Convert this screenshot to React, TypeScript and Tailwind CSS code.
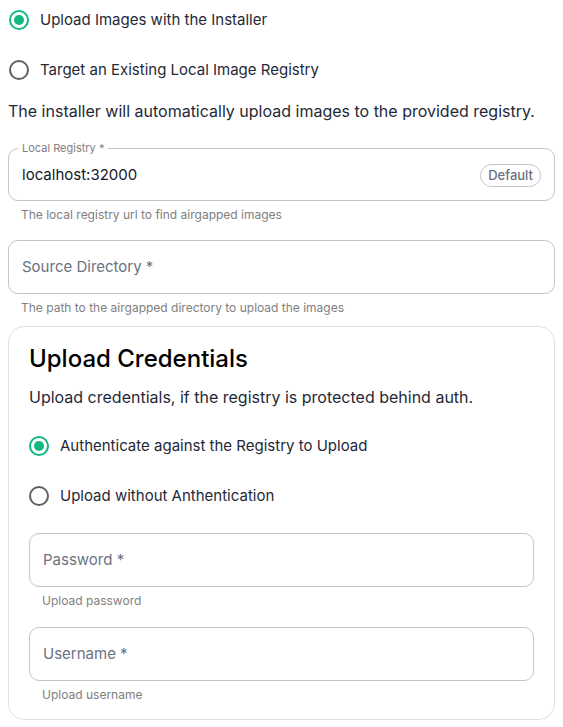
import React from 'react'

const font = { fontFamily: 'Inter, "Noto Sans", sans-serif' }

function Radio({ label, checked }: { label: string; checked?: boolean }) {
  return (
    <label className="flex h-[50px] items-center gap-[11px]">
      <span
        className={
          'flex h-[20px] w-[20px] items-center justify-center rounded-full border-2 ' +
          (checked ? 'border-[#10b981]' : 'border-[#616161]')
        }
      >
        {checked && <span className="h-[10px] w-[10px] rounded-full bg-[#10b981]" />}
      </span>
      <span className="text-[15px] text-[#1f2937]">{label}</span>
    </label>
  )
}

function Field({ label, helper }: { label: string; helper: string }) {
  return (
    <div>
      <div className="flex h-[54px] items-center rounded-[10px] border border-[#c4c4c4] px-[13px]">
        <span className="text-[15px] text-[#6b7280]">{label}</span>
      </div>
      <p className="px-[13px] pt-[6px] text-[12px] leading-[16px] text-[#808080]">{helper}</p>
    </div>
  )
}

export default function App() {
  return (
    <div className="bg-white px-2 pb-2" style={font}>
      {/* top radios */}
      <div className="-mt-[5px] pl-[1px]">
        <Radio label="Upload Images with the Installer" checked />
        <Radio label="Target an Existing Local Image Registry" />
      </div>

      <p className="mt-[4px] text-[16px] text-[#1f2937]">
        The installer will automatically upload images to the provided registry.
      </p>

      {/* local registry */}
      <fieldset className="mt-[17px] flex h-[61px] items-center justify-between rounded-[10px] border border-[#c4c4c4] pl-[13px] pr-[13px] pb-[6px]">
        <legend className="-ml-[4px] px-[4px] text-[11px] text-[#808080]">
          Local Registry *
        </legend>
        <span className="text-[15px] text-[#111827]">localhost:32000</span>
        <span className="flex h-[23px] items-center rounded-full border border-[#c4c4c4] px-[7px] text-[13px] font-medium text-[#6b7280]">
          Default
        </span>
      </fieldset>
      <p className="px-[13px] pt-[6px] text-[12px] leading-[16px] text-[#808080]">
        The local registry url to find airgapped images
      </p>

      <div className="mt-[17px]">
        <Field label="Source Directory *" helper="The path to the airgapped directory to upload the images" />
      </div>

      {/* credentials card */}
      <div className="mt-[10px] rounded-[16px] border border-[#e0e0e0] px-[20px] pb-[16px] pt-[16px]">
        <h2 className="text-[24px] leading-[32px] font-medium text-black">Upload Credentials</h2>
        <p className="mt-[10px] text-[16px] leading-[24px] text-[#1f2937]">
          Upload credentials, if the registry is protected behind auth.
        </p>
        <div className="mt-[12px]">
          <Radio label="Authenticate against the Registry to Upload" checked />
          <Radio label="Upload without Anthentication" />
        </div>
        <div className="mt-[12px] flex flex-col gap-[18px]">
          <Field label="Password *" helper="Upload password" />
          <Field label="Username *" helper="Upload username" />
        </div>
      </div>
    </div>
  )
}
